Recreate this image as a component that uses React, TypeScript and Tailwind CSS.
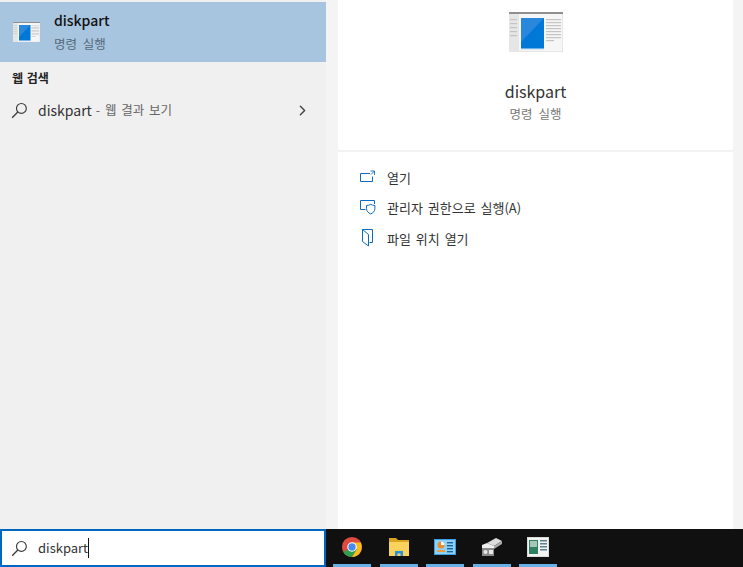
import { ChevronRight } from "lucide-react";

const font = { fontFamily: '"Noto Sans CJK KR", "Noto Sans", sans-serif' };

const SearchIcon = ({ className }: { className?: string }) => (
  <svg viewBox="0 0 18 18" className={className} fill="none" stroke="#3a3a3a" strokeWidth="1.2">
    <circle cx="11" cy="6.8" r="5.2" />
    <path d="M7.2 10.6 1.2 16.6" strokeWidth="1.4" />
  </svg>
);

// the "run command" window picture, same drawing at both sizes
const AppIcon = ({ className }: { className?: string }) => (
  <svg viewBox="0 0 54 40" className={className}>
    <rect width="54" height="40" fill="#e6e6e6" />
    <rect width="54" height="2" fill="#8f8f8f" />
    <rect x="10" y="2" width="43" height="37" fill="#f6f6f6" />
    <rect x="12" y="6" width="23" height="31" fill="#0078d7" />
    <path d="M12 6h23L12 30z" fill="#2a88dc" />
    <rect x="12" y="36" width="23" height="1.2" fill="#6fb2ea" />
    <g fill="#c4c4c4">
      <rect x="37" y="7" width="15" height="1.2" />
      <rect x="37" y="10" width="15" height="1.2" />
      <rect x="37" y="13" width="15" height="1.2" />
      <rect x="37" y="16" width="15" height="1.2" />
      <rect x="37" y="19" width="15" height="1.2" />
      <rect x="37" y="22" width="15" height="1.2" />
      <rect x="37" y="25" width="15" height="1.2" />
      <rect x="37" y="28" width="8" height="1.2" />
      <rect x="1" y="7" width="7" height="1.2" />
      <rect x="1" y="11" width="7" height="1.2" />
      <rect x="1" y="15" width="7" height="1.2" />
      <rect x="1" y="19" width="7" height="1.2" />
      <rect x="1" y="23" width="7" height="1.2" />
    </g>
  </svg>
);

const OpenIcon = () => (
  <svg viewBox="0 0 16 14" className="h-[14px] w-4" fill="none" stroke="#0f6cbd" strokeWidth="1">
    <path d="M10 3.5H.5v8h12V6.5" />
    <path d="M10.5 1h4v4M14.5 1l-3.5 3.5" strokeWidth="0.9" />
  </svg>
);

const AdminIcon = () => (
  <svg viewBox="0 0 17 15" className="h-[15px] w-[17px]" fill="none" stroke="#0f6cbd" strokeWidth="1">
    <path d="M5.5 9.500H.5V.5h14v3.500" />
    <path d="M6.500 5.500c1.800 0 3-.4 4.200-1.200 1.200.8 2.400 1.200 4.200 1.200v3.200c0 2.400-1.800 4.200-4.200 5.300-2.400-1.100-4.200-2.900-4.200-5.300z" />
  </svg>
);

const FolderIcon = () => (
  <svg viewBox="0 0 14 18" className="h-[18px] w-[14px]" fill="none" stroke="#0f6cbd" strokeWidth="1">
    <path d="M2.500.5h10v13h-3M2.500.5v12l6 4.500V5.500L2.500.5z" />
  </svg>
);

const ActionRow = ({ icon, label }: { icon: React.ReactNode; label: string }) => (
  <div className="flex h-[30.500px] items-center pl-[22px]">
    <div className="flex w-[27px] items-center">{icon}</div>
    <span className="text-[13px] text-[#333333] [word-spacing:2px]">{label}</span>
  </div>
);

const Chrome = () => (
  <svg viewBox="0 0 24 24" className="h-[22px] w-[22px]">
    <circle cx="12" cy="12" r="11" fill="#dd4b3e" />
    <path d="M12 12 2.500 17.500A11 11 0 0 0 12 23l5-8z" fill="#2f9e4f" />
    <path d="M12 7h9.500A11 11 0 0 1 12 23l5-8z" fill="#f4c020" />
    <circle cx="12" cy="12" r="5.200" fill="#ffffff" />
    <circle cx="12" cy="12" r="4" fill="#4a8af0" />
  </svg>
);

const Explorer = () => (
  <svg viewBox="0 0 22 20" className="h-5 w-[22px]">
    <path d="M1 1h7l2 2h11v4H1z" fill="#d9a521" />
    <rect x="1" y="5" width="20" height="14" fill="#fbd25e" />
    <path d="M7 19v-5h8v5h-2.500v-2.500h-3V19z" fill="#2d8fd5" />
  </svg>
);

const Dashboard = () => (
  <svg viewBox="0 0 22 16" className="h-4 w-[22px]">
    <rect width="22" height="16" fill="#3aa0e4" />
    <rect x="1" y="1" width="20" height="14" fill="#8fd0f5" />
    <circle cx="7" cy="6" r="3.500" fill="#e98a2c" />
    <path d="M7 6V2.500A3.500 3.500 0 0 1 10.500 6z" fill="#ffffff" />
    <rect x="3" y="11" width="8" height="2" fill="#ed9b3c" />
    <g fill="#17649f">
      <rect x="13" y="3" width="6" height="1.400" />
      <rect x="13" y="6" width="6" height="1.400" />
      <rect x="13" y="9" width="6" height="1.400" />
      <rect x="13" y="12" width="6" height="1.400" />
    </g>
  </svg>
);

const Drive = () => (
  <svg viewBox="0 0 22 20" className="h-5 w-[22px]">
    <path d="M6 6 15 1l6 3-8 5z" fill="#dcdcdc" />
    <path d="M13 9l8-5v3l-8 5z" fill="#a9a9a9" />
    <path d="M1 8l5-2 7 3v2H1z" fill="#f0f0f0" />
    <rect x="1" y="11" width="12" height="8" fill="#8b8b8b" />
    <circle cx="4.500" cy="15" r="2" fill="#e8e8e8" />
    <rect x="8" y="13" width="4" height="4" fill="#e8e8e8" />
  </svg>
);

const Window = () => (
  <svg viewBox="0 0 22 20" className="h-5 w-[22px]">
    <rect width="22" height="20" fill="#d8dcd8" />
    <rect x="1" y="1" width="20" height="18" fill="#f1f3f1" />
    <rect x="2" y="3" width="9" height="14" fill="#2f7f63" />
    <rect x="3" y="4" width="7" height="6" fill="#a6c6ba" />
    <g fill="#5f8090">
      <rect x="13" y="3" width="7" height="1.500" />
      <rect x="13" y="6" width="7" height="1.500" />
      <rect x="13" y="9" width="7" height="1.500" />
      <rect x="13" y="12" width="7" height="1.500" />
    </g>
  </svg>
);

const taskItems = [
  { id: "chrome", icon: <Chrome /> },
  { id: "explorer", icon: <Explorer /> },
  { id: "dashboard", icon: <Dashboard /> },
  { id: "drive", icon: <Drive /> },
  { id: "window", icon: <Window /> },
];

export default function App() {
  return (
    <div className="flex h-[567px] w-[743px] flex-col overflow-hidden bg-[#f4f4f4]" style={font}>
      <div className="flex min-h-0 flex-1">
        <div className="w-[326px] bg-[#f0f0f0] pt-[2px]">
          <div className="flex h-[60px] items-center bg-[#a7c5de] pl-[13px]">
            <AppIcon className="h-5 w-[27px]" />
            <div className="ml-[14px] -mt-[2px]">
              <div className="text-[14px] font-medium leading-5 text-[#111111]">diskpart</div>
              <div className="mt-[6px] text-[12.500px] leading-4 text-[#54687a] [word-spacing:3px]">명령 실행</div>
            </div>
          </div>
          <div className="pl-[12px] pt-[8px] text-[12px] font-bold leading-4 text-[#222222] [word-spacing:1px]">웹 검색</div>
          <div className="mt-[8px] flex h-[32px] items-center pl-[11px] pr-[15px] pt-[1px]">
            <SearchIcon className="h-[17px] w-[17px]" />
            <span className="ml-[10px] text-[14px] text-[#333333]">diskpart</span>
            <span className="ml-1 text-[12.500px] text-[#666666] [word-spacing:2px]">- 웹 결과 보기</span>
            <ChevronRight className="ml-auto h-[17px] w-[17px] text-[#444444]" strokeWidth={2} />
          </div>
        </div>
        <div className="ml-[12px] w-[395px] bg-white">
          <div className="flex h-[152px] flex-col items-center border-b-2 border-[#f2f2f2] pt-[12px]">
            <AppIcon className="h-[40px] w-[54px]" />
            <div className="mt-[27px] text-[16px] leading-6 text-[#333333]">diskpart</div>
            <div className="mt-[3px] text-[12.500px] leading-4 text-[#777777] [word-spacing:3px]">명령 실행</div>
          </div>
          <div className="pt-[10px]">
            <ActionRow icon={<OpenIcon />} label="열기" />
            <ActionRow icon={<AdminIcon />} label="관리자 권한으로 실행(A)" />
            <ActionRow icon={<FolderIcon />} label="파일 위치 열기" />
          </div>
        </div>
      </div>
      <div className="flex h-[38px] bg-[#101010]">
        <div className="flex w-[326px] items-center border-2 border-[#0067c0] bg-white pl-[9px]">
          <SearchIcon className="h-[17px] w-[17px]" />
          <span className="ml-[10px] text-[13px] text-[#333333]">diskpart</span>
          <span className="h-[20px] w-px bg-[#111111]" />
        </div>
        <div className="flex gap-[8.500px] pl-[7px]">
          {taskItems.map((item) => (
            <div
              key={item.id}
              className="flex h-[38px] w-[38px] items-center justify-center border-b-[3px] border-[#66b0e6]"
            >
              {item.icon}
            </div>
          ))}
        </div>
      </div>
    </div>
  );
}
